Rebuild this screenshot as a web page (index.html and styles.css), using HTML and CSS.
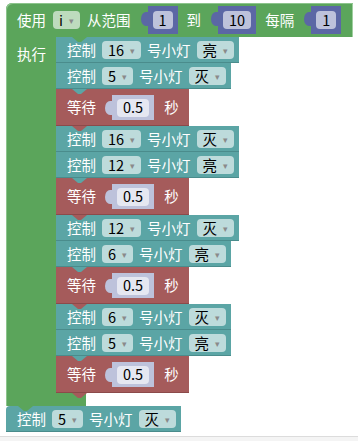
FILE: index.html
```html
<!DOCTYPE html>
<html lang="zh">
<head>
    <meta charset="UTF-8">
    <meta name="viewport" content="width=device-width, initial-scale=1.0">
    <title>循环积木</title>
    <link rel="stylesheet" href="styles.css">
</head>
<body>
    <div class="workspace">
        <div class="loop">
            <div class="loop-head">
                <span class="label">使用</span>
                <span class="field drop">i<i class="arrow">▾</i></span>
                <span class="label">从范围</span>
                <span class="value"><span class="field">1</span></span>
                <span class="label">到</span>
                <span class="value"><span class="field">10</span></span>
                <span class="label">每隔</span>
                <span class="value"><span class="field">1</span></span>
            </div>
            <div class="loop-body">
                <div class="loop-arm"><span class="label">执行</span></div>
                <div class="statements">
                    <div class="block ctrl">
                        <span class="label">控制</span>
                        <span class="field drop">16<i class="arrow">▾</i></span>
                        <span class="label">号小灯</span>
                        <span class="field drop">亮<i class="arrow">▾</i></span>
                    </div>
                    <div class="block ctrl">
                        <span class="label">控制</span>
                        <span class="field drop">5<i class="arrow">▾</i></span>
                        <span class="label">号小灯</span>
                        <span class="field drop">灭<i class="arrow">▾</i></span>
                    </div>
                    <div class="block wait">
                        <span class="label">等待</span>
                        <span class="value shadow"><span class="field">0.5</span></span>
                        <span class="label">秒</span>
                    </div>
                    <div class="block ctrl">
                        <span class="label">控制</span>
                        <span class="field drop">16<i class="arrow">▾</i></span>
                        <span class="label">号小灯</span>
                        <span class="field drop">灭<i class="arrow">▾</i></span>
                    </div>
                    <div class="block ctrl">
                        <span class="label">控制</span>
                        <span class="field drop">12<i class="arrow">▾</i></span>
                        <span class="label">号小灯</span>
                        <span class="field drop">亮<i class="arrow">▾</i></span>
                    </div>
                    <div class="block wait">
                        <span class="label">等待</span>
                        <span class="value shadow"><span class="field">0.5</span></span>
                        <span class="label">秒</span>
                    </div>
                    <div class="block ctrl">
                        <span class="label">控制</span>
                        <span class="field drop">12<i class="arrow">▾</i></span>
                        <span class="label">号小灯</span>
                        <span class="field drop">灭<i class="arrow">▾</i></span>
                    </div>
                    <div class="block ctrl">
                        <span class="label">控制</span>
                        <span class="field drop">6<i class="arrow">▾</i></span>
                        <span class="label">号小灯</span>
                        <span class="field drop">亮<i class="arrow">▾</i></span>
                    </div>
                    <div class="block wait">
                        <span class="label">等待</span>
                        <span class="value shadow"><span class="field">0.5</span></span>
                        <span class="label">秒</span>
                    </div>
                    <div class="block ctrl">
                        <span class="label">控制</span>
                        <span class="field drop">6<i class="arrow">▾</i></span>
                        <span class="label">号小灯</span>
                        <span class="field drop">灭<i class="arrow">▾</i></span>
                    </div>
                    <div class="block ctrl">
                        <span class="label">控制</span>
                        <span class="field drop">5<i class="arrow">▾</i></span>
                        <span class="label">号小灯</span>
                        <span class="field drop">亮<i class="arrow">▾</i></span>
                    </div>
                    <div class="block wait">
                        <span class="label">等待</span>
                        <span class="value shadow"><span class="field">0.5</span></span>
                        <span class="label">秒</span>
                    </div>
                </div>
            </div>
            <div class="loop-foot"></div>
        </div>
        <div class="block ctrl solo">
            <span class="label">控制</span>
            <span class="field drop">5<i class="arrow">▾</i></span>
            <span class="label">号小灯</span>
            <span class="field drop">灭<i class="arrow">▾</i></span>
        </div>
    </div>
    <div class="scrollbar"></div>
</body>
</html>
```

FILE: styles.css
```css
/* Workspace */
body {
    margin: 0;
    background: #ffffff;
    font-family: "Noto Sans CJK SC", "Noto Sans", sans-serif;
    font-size: 14.5px;
}

.workspace {
    display: flex;
    flex-direction: column;
    align-items: flex-start;
    height: 436px;
    padding: 3px 0 0 6px;
    box-sizing: border-box;
}

.scrollbar {
    height: 5px;
    border-top: 1px solid #dcdcdc;
    background: #f4f4f4;
}

/* Text and fields */
.label {
    color: #ffffff;
    line-height: 1;
    white-space: nowrap;
}

.field {
    display: inline-flex;
    align-items: center;
    height: 18px;
    padding: 0 6px;
    border-radius: 4px;
    background: rgba(255, 255, 255, 0.6);
    color: #000000;
    line-height: 1;
    white-space: nowrap;
}

.arrow {
    font-style: normal;
    font-size: 9px;
    color: #8a8a8a;
    margin-left: 6px;
}

/* Number inputs */
.value {
    position: relative;
    display: inline-flex;
    align-items: center;
    height: 28px;
    padding: 0 5px;
    margin: 0 2px 0 10px;
    background: #5b67a5;
}

.value::before {
    content: "";
    position: absolute;
    left: -7px;
    top: 6px;
    width: 7px;
    height: 14px;
    background: inherit;
    border-radius: 5px 0 0 5px / 7px 0 0 7px;
}

.value.shadow {
    height: 25px;
    margin: 0 0 0 10px;
    background: #bdc2db;
}

/* Loop block */
.loop {
    display: flex;
    flex-direction: column;
    align-items: flex-start;
}

.loop-head {
    position: relative;
    display: flex;
    align-items: center;
    gap: 7px;
    height: 34px;
    padding: 0 10px 0 11px;
    background: #5ba55b;
    border-radius: 6px 0 0 0;
    box-shadow: inset 1px 1px 0 #8cc48c, inset -1px 0 0 #9fcf9f;
}

.loop-head::after,
.block::after,
.loop-foot::after {
    content: "";
    position: absolute;
    top: 100%;
    width: 15px;
    height: 5px;
    background: inherit;
    clip-path: polygon(0 0, 100% 0, 60% 100%, 40% 100%);
    z-index: 1;
}

.loop-head::after {
    left: 66px;
}

.loop-body {
    display: flex;
}

.loop-arm {
    width: 50px;
    padding: 6px 0 0 11px;
    box-sizing: border-box;
    background: #5ba55b;
    box-shadow: inset 1px 0 0 #8cc48c;
}

.statements {
    display: flex;
    flex-direction: column;
    align-items: flex-start;
}

.loop-foot {
    position: relative;
    width: 80px;
    height: 13px;
    background: #5ba55b;
    box-shadow: inset 1px 0 0 #8cc48c;
}

.loop-foot::after {
    left: 12px;
}

/* Statement blocks */
.block {
    position: relative;
    display: flex;
    align-items: center;
    gap: 6px;
    padding: 0 5px 0 11px;
    box-sizing: border-box;
}

.block::after {
    left: 16px;
}

.ctrl {
    height: 26px;
    background: #5ba5a5;
    box-shadow: inset 0 -1px 0 #4a8c8c;
}

.wait {
    height: 37px;
    background: #a55b5b;
    box-shadow: inset 0 -1px 0 #8c4a4a;
    padding-right: 10px;
}

.wait .shadow + .label {
    margin-left: 4px;
}

.solo {
    border-radius: 4px 0 0 0;
}

.solo::after {
    display: none;
}
```
